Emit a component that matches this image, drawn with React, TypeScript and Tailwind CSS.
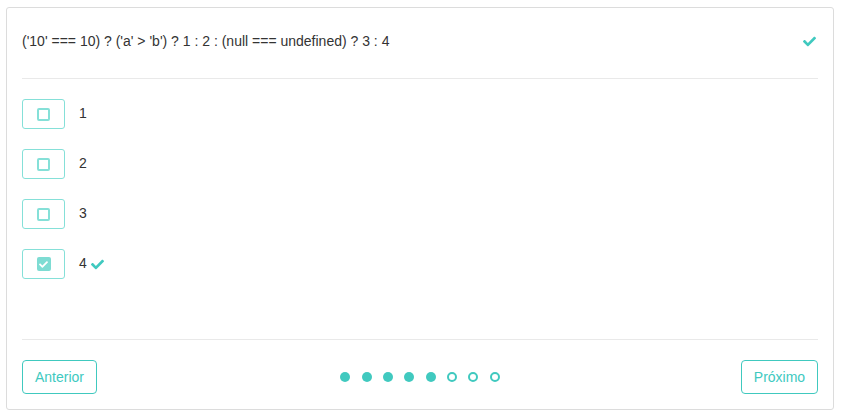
import React from "react";

const Check = ({ className }: { className?: string }) => (
  <svg viewBox="0 0 512 512" className={className} fill="currentColor">
    <path d="M173.9 439.4l-166.4-166.4c-10-10-10-26.2 0-36.2l36.2-36.2c10-10 26.2-10 36.2 0L192 312.7 432.1 72.6c10-10 26.2-10 36.2 0l36.2 36.2c10 10 10 26.2 0 36.2L210.1 439.4c-10 10-26.2 10-36.2 0z" />
  </svg>
);

export default function App() {
  const options = ["1", "2", "3", "4"];
  const dots = [true, true, true, true, true, false, false, false];
  return (
    <div
      className="w-[844px] h-[420px] bg-white pt-[7px] pl-[6px]"
      style={{ fontFamily: '"Liberation Sans", Arial, sans-serif' }}
    >
      <div className="w-[828px] h-[403px] border border-[#dcdcdc] rounded-[3px] px-[15px] flex flex-col">
        <div className="flex items-center justify-between pt-[23px] pb-[27px] leading-[20px] text-[14px] text-[#333]">
          <span>('10' === 10) ? ('a' &gt; 'b') ? 1 : 2 : (null === undefined) ? 3 : 4</span>
          <Check className="w-[13px] h-[13px] text-[#40c9bf] mr-[2px]" />
        </div>
        <div className="h-px bg-[#e9e9e9]" />
        <div className="flex flex-col gap-[20px] pt-[20px] h-[260px]">
          {options.map((o, i) => {
            const checked = i === 3;
            return (
              <div key={o} className="flex items-center h-[30px]">
                <div className="w-[43px] h-[30px] border border-[#85e0d8] rounded-[3px] flex items-center justify-center">
                  {checked ? (
                    <div className="w-[14px] h-[14px] rounded-[2px] bg-[#7edcd3] flex items-center justify-center">
                      <Check className="w-[9px] h-[9px] text-white" />
                    </div>
                  ) : (
                    <div className="w-[13px] h-[13px] rounded-[2px] border-2 border-[#85e0d8]" />
                  )}
                </div>
                <span className="ml-[14px] text-[14px] text-[#333] leading-[20px] -mt-[2px]">{o}</span>
                {checked && <Check className="ml-[4px] w-[13px] h-[13px] text-[#40c9bf]" />}
              </div>
            );
          })}
        </div>
        <div className="h-px bg-[#e9e9e9]" />
        <div className="flex items-center justify-between pt-[20px]">
          <button className="w-[75px] h-[34px] border border-[#40c9bf] rounded-[4px] text-[#40c9bf] text-[14px] bg-white">
            Anterior
          </button>
          <div className="flex items-center gap-[11.4px] ml-[2px]">
            {dots.map((f, i) =>
              f ? (
                <div key={i} className="w-[10px] h-[10px] rounded-full bg-[#40c9bf]" />
              ) : (
                <div key={i} className="w-[10px] h-[10px] rounded-full border-2 border-[#40c9bf]" />
              )
            )}
          </div>
          <button className="w-[77px] h-[34px] border border-[#40c9bf] rounded-[4px] text-[#40c9bf] text-[14px] bg-white">
            Próximo
          </button>
        </div>
      </div>
    </div>
  );
}
